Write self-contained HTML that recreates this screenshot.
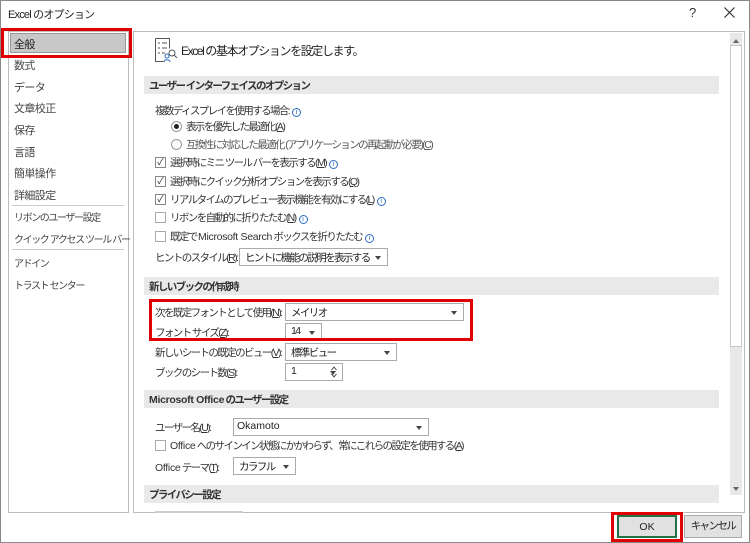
<!DOCTYPE html>
<html><head><meta charset="utf-8"><style>
*{box-sizing:border-box;margin:0;padding:0}
body{width:750px;height:543px;background:#fff;font-family:"Liberation Sans","Noto Sans CJK JP",sans-serif;font-size:10.5px;letter-spacing:-1.6px;color:#333;position:relative;overflow:hidden}
.a{position:absolute;white-space:nowrap}
.outer{position:absolute;left:0;top:0;width:750px;height:543px;border:1px solid #888}
.title{left:8px;top:6px;font-size:11px;color:#222;letter-spacing:-0.8px}
.lp{position:absolute;left:8px;top:31px;width:121px;height:482px;border:1px solid #bbb;background:#fff}
.li{position:absolute;left:14px;font-size:11px;color:#444;letter-spacing:-0.6px}
.sm{font-size:10px;letter-spacing:-1.4px}
.sel{position:absolute;left:10px;top:33px;width:116px;height:20px;background:#c8c8c8;border:1px solid #999}
.sep{position:absolute;left:12px;width:112px;height:1px;background:#ccc}
.red{position:absolute;border:3px solid #e00000}
.rp{position:absolute;left:133px;top:31px;width:612px;height:482px;border:1px solid #bbb;background:#fff}
.hd{position:absolute;left:144px;width:575px;height:18px;background:#e9e9e9;font-weight:bold;font-size:10.5px;color:#333;padding:2px 0 0 5px}
.cb{position:absolute;width:11px;height:11px;border:1px solid #888;background:#fff;font-size:9px;line-height:9px;text-align:center;color:#222;letter-spacing:0}
.rd{position:absolute;width:11px;height:11px;border:1px solid #999;border-radius:50%;background:#fff}
.rd.on::after{content:"";position:absolute;left:2px;top:2px;width:5px;height:5px;border-radius:50%;background:#222}
.i{display:inline-block;width:9px;height:9px;border:1px solid #2b6cc4;border-radius:50%;font-size:7px;line-height:7px;text-align:center;color:#2b6cc4;vertical-align:0;margin-left:3px;letter-spacing:0}
.dd{position:absolute;height:18px;border:1px solid #aaa;background:#fff;padding:1px 0 0 5px;color:#222;overflow:hidden}
.dd::after{content:"";position:absolute;right:6px;top:7px;border:3px solid transparent;border-top:4px solid #444}
.u{text-decoration:underline}
.L{letter-spacing:-0.3px}
.btn{position:absolute;top:515px;height:23px;background:#e1e1e1;border:1px solid #aaa;text-align:center;line-height:20px;color:#222}
</style></head><body>
<div class="outer"></div>
<div class="a title">Excel のオプション</div>
<div class="a" style="left:689px;top:5px;font-size:13px;letter-spacing:0">?</div>
<svg class="a" style="left:724px;top:7px" width="11" height="11"><path d="M0.5 0.5l10 10M10.5 0.5l-10 10" stroke="#333" stroke-width="1.2"/></svg>

<div class="lp"></div>
<div class="sel"></div>
<div class="li a" style="top:36px;color:#222">全般</div>
<div class="li a" style="top:57px">数式</div>
<div class="li a" style="top:79px">データ</div>
<div class="li a" style="top:100px">文章校正</div>
<div class="li a" style="top:122px">保存</div>
<div class="li a" style="top:144px">言語</div>
<div class="li a" style="top:165px">簡単操作</div>
<div class="li a" style="top:187px">詳細設定</div>
<div class="sep" style="top:205px"></div>
<div class="li a sm" style="top:209px">リボンのユーザー設定</div>
<div class="li a sm" style="top:231px">クイック アクセス ツール バー</div>
<div class="sep" style="top:249px"></div>
<div class="li a sm" style="top:255px">アドイン</div>
<div class="li a sm" style="top:277px">トラスト センター</div>
<div class="red" style="left:1px;top:28px;width:131px;height:30px"></div>

<div class="rp"></div>
<svg class="a" style="left:153px;top:37px" width="26" height="27" viewBox="0 0 26 27" fill="none" stroke="#555" stroke-width="1">
<path d="M2.5 1.5h14v10M2.5 1.5v23h8"/><path d="M5 6h2M9 6h5M5 11h2M9 11h5M5 16h2M9 16h3" /><circle cx="19" cy="16" r="3"/><path d="M21 18l3 3"/><circle cx="14" cy="19" r="2" stroke="#2b6cc4"/><path d="M11 25c0-3 6-3 6 0" stroke="#2b6cc4"/></svg>
<div class="a" style="left:181px;top:42px;font-size:12px;color:#222;letter-spacing:-1.4px">Excel の基本オプションを設定します。</div>

<div class="hd" style="top:76px">ユーザー インターフェイスのオプション</div>
<div class="a" style="left:155px;top:103px">複数ディスプレイを使用する場合:<span class="i">i</span></div>
<div class="rd on" style="left:171px;top:121px"></div>
<div class="a" style="left:186px;top:119px">表示を優先した最適化(<span class="u">A</span>)</div>
<div class="rd" style="left:171px;top:139px"></div>
<div class="a" style="left:186px;top:137px;color:#555">互換性に対応した最適化 (アプリケーションの再起動が必要)(<span class="u">C</span>)</div>
<div class="cb" style="left:155px;top:157px">✓</div>
<div class="a" style="left:170px;top:155px">選択時にミニ ツール バーを表示する(<span class="u">M</span>)<span class="i">i</span></div>
<div class="cb" style="left:155px;top:176px">✓</div>
<div class="a" style="left:170px;top:174px">選択時にクイック分析オプションを表示する(<span class="u">Q</span>)</div>
<div class="cb" style="left:155px;top:194px">✓</div>
<div class="a" style="left:170px;top:192px">リアルタイムのプレビュー表示機能を有効にする(<span class="u">L</span>)<span class="i">i</span></div>
<div class="cb" style="left:155px;top:212px;border-color:#aaa"></div>
<div class="a" style="left:170px;top:210px">リボンを自動的に折りたたむ(<span class="u">N</span>)<span class="i">i</span></div>
<div class="cb" style="left:155px;top:231px;border-color:#aaa"></div>
<div class="a" style="left:170px;top:229px">既定で <span class="L">Microsoft Search</span> ボックスを折りたたむ<span class="i">i</span></div>
<div class="a" style="left:155px;top:250px">ヒントのスタイル(<span class="u">R</span>):</div>
<div class="dd" style="left:239px;top:248px;width:149px">ヒントに機能の説明を表示する</div>

<div class="hd" style="top:277px">新しいブックの作成時</div>
<div class="a" style="left:155px;top:305px">次を既定フォントとして使用(<span class="u">N</span>):</div>
<div class="dd" style="left:285px;top:303px;width:179px">メイリオ</div>
<div class="a" style="left:155px;top:325px">フォント サイズ(<span class="u">Z</span>):</div>
<div class="dd" style="left:285px;top:323px;width:37px">14</div>
<div class="a" style="left:155px;top:345px">新しいシートの既定のビュー(<span class="u">V</span>):</div>
<div class="dd" style="left:285px;top:343px;width:112px">標準ビュー</div>
<div class="a" style="left:155px;top:365px">ブックのシート数(<span class="u">S</span>):</div>
<div class="dd" style="left:285px;top:363px;width:58px;">1</div>
<svg class="a" style="left:330px;top:365px" width="8" height="14"><path d="M1.5 5l2.5-3 2.5 3M1.5 9l2.5 3 2.5-3" stroke="#555" fill="none"/></svg>
<div class="red" style="left:149px;top:299px;width:324px;height:42px"></div>

<div class="hd" style="top:390px"><span class="L">Microsoft Office</span> のユーザー設定</div>
<div class="a" style="left:155px;top:420px">ユーザー名(<span class="u">U</span>):</div>
<div class="dd" style="left:233px;top:418px;width:196px;padding-left:3px;letter-spacing:0">Okamoto</div>
<style>.nodd::after{display:none}</style>
<div class="cb" style="left:155px;top:440px;border-color:#aaa"></div>
<div class="a" style="left:170px;top:438px"><span class="L">Office</span> へのサインイン状態にかかわらず、常にこれらの設定を使用する(<span class="u">A</span>)</div>
<div class="a" style="left:155px;top:460px"><span class="L">Office</span> テーマ(<span class="u">T</span>):</div>
<div class="dd" style="left:233px;top:457px;width:63px">カラフル</div>
<div class="hd" style="top:485px">プライバシー設定</div>
<div class="a" style="left:155px;top:511px;width:88px;height:2px;background:#ccc"></div>

<div class="a" style="left:730px;top:33px;width:12px;height:462px;background:#e8e8e8"></div>
<div class="a" style="left:730px;top:45px;width:12px;height:302px;background:#fff;border:1px solid #c8c8c8"></div>
<div class="a" style="left:733px;top:36px;border:3px solid transparent;border-bottom:4px solid #666"></div>
<div class="a" style="left:733px;top:487px;border:3px solid transparent;border-top:4px solid #666"></div>

<div class="btn" style="left:617px;width:60px;border:2px solid #217346;letter-spacing:0">OK</div>
<div class="btn" style="left:684px;width:58px">キャンセル</div>
<div class="red" style="left:611px;top:512px;width:72px;height:30px"></div>
</body></html>
